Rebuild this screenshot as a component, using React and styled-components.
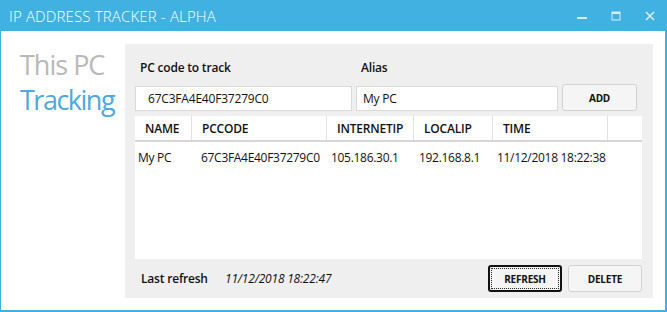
import React from "react";
import styled, { createGlobalStyle } from "styled-components";

const GlobalStyle = createGlobalStyle`
  html, body {
    margin: 0;
    padding: 0;
    background: #41b1e1;
  }
  * { box-sizing: border-box; }
`;

const font = `"Open Sans", "Noto Sans", "Liberation Sans", sans-serif`;

const Window = styled.div`
  width: 667px;
  height: 312px;
  display: flex;
  flex-direction: column;
  background: #41b1e1;
  font-family: ${font};
`;

const TitleBar = styled.div`
  height: 31px;
  display: flex;
  align-items: center;
  padding-left: 9px;
  color: #ffffff;
`;

const Title = styled.div`
  flex: 1;
  font-size: 15px;
  font-weight: 300;
  letter-spacing: 0.15px;
`;

const Controls = styled.div`
  display: flex;
  align-items: center;
  height: 100%;
`;

const ControlBtn = styled.div`
  width: 34px;
  height: 31px;
  display: flex;
  align-items: center;
  justify-content: center;
  color: #d7eef9;
`;

const Body = styled.div`
  flex: 1;
  display: flex;
  background: #ffffff;
  margin: 0 2px 2px 1px;
`;

const Sidebar = styled.div`
  width: 124px;
  padding: 16px 0 0 19px;
  display: flex;
  flex-direction: column;
`;

const NavItem = styled.div`
  font-size: 27px;
  line-height: 35px;
  color: ${({ active }) => (active ? "#4ea9dc" : "#b9b9b9")};
  letter-spacing: ${({ active }) => (active ? "-1.5px" : "-1px")};
`;

const Panel = styled.div`
  margin-top: 13px;
  width: 528px;
  height: 254px;
  background: #efefef;
  padding: 0 11px 0 10px;
  display: flex;
  flex-direction: column;
`;

const FormRow = styled.div`
  display: flex;
  gap: 4px;
  align-items: ${({ end }) => (end ? "flex-end" : "center")};
`;

const Label = styled.div`
  width: ${({ w }) => w}px;
  padding-left: 5px;
  font-size: 12px;
  line-height: 16px;
  font-weight: 600;
  color: #111;
  letter-spacing: -0.2px;
`;

const LabelRow = styled(FormRow)`
  padding-top: 16px;
  margin-bottom: 8px;
`;

const Input = styled.div`
  width: ${({ w }) => w}px;
  height: 25px;
  background: #fff;
  border: 1px solid #dadada;
  display: flex;
  align-items: center;
  padding-left: ${({ pad }) => pad}px;
  font-size: 12px;
  color: #111;
  letter-spacing: -0.2px;
`;

const Button = styled.div`
  width: ${({ w }) => w}px;
  height: 27px;
  margin-left: ${({ ml }) => ml || 0}px;
  border-radius: 3px;
  border: ${({ focused }) => (focused ? "2px solid #111" : "1px solid #d2d2d2")};
  background: #f5f5f5;
  display: flex;
  align-items: center;
  justify-content: center;
  font-size: 10px;
  font-weight: 700;
  color: #111;
  letter-spacing: -0.2px;
  outline: ${({ focused }) => (focused ? "1px dotted #222" : "none")};
  outline-offset: -4px;
`;

const Table = styled.div`
  margin-top: 5px;
  width: 507px;
  height: 143px;
  background: #fff;
`;

const gridCols = "57px 135px 87px 79px 115px 34px";

const HeaderRow = styled.div`
  display: grid;
  grid-template-columns: ${gridCols};
  height: 26px;
  border-bottom: 2px solid #d6d6d6;
`;

const HeaderCell = styled.div`
  border-right: 1px solid #e2e2e2;
  padding-left: 10px;
  display: flex;
  align-items: center;
  font-size: 12px;
  font-weight: 600;
  color: #111;
  letter-spacing: -0.2px;
  &:last-child { border-right: none; }
`;

const DataRow = styled.div`
  display: grid;
  grid-template-columns: ${gridCols};
  height: 30px;
  align-items: center;
`;

const DataCell = styled.div`
  padding-left: ${({ pad }) => pad}px;
  font-size: 12px;
  color: #111;
  white-space: nowrap;
  letter-spacing: -0.3px;
`;

const Footer = styled.div`
  margin-top: 6px;
  display: flex;
  align-items: center;
  height: 27px;
`;

const FooterLabel = styled.div`
  width: 90px;
  padding-left: 6px;
  font-size: 12px;
  font-weight: 600;
  color: #111;
  letter-spacing: -0.2px;
`;

const FooterDate = styled.div`
  flex: 1;
  font-size: 12px;
  font-style: italic;
  color: #111;
  letter-spacing: -0.2px;
`;

const columns = ["NAME", "PCCODE", "INTERNETIP", "LOCALIP", "TIME", ""];
const cellPad = [3, 9, 4, 5, 4, 0];
const rows = [
  ["My PC", "67C3FA4E40F37279C0", "105.186.30.1", "192.168.8.1", "11/12/2018 18:22:38", ""],
];

export default function App() {
  return (
    <>
      <GlobalStyle />
      <Window>
        <TitleBar>
          <Title>IP ADDRESS TRACKER - ALPHA</Title>
          <Controls>
            <ControlBtn>
              <svg width="10" height="10" viewBox="0 0 10 10">
                <rect x="0" y="6" width="10" height="2" fill="currentColor" />
              </svg>
            </ControlBtn>
            <ControlBtn>
              <svg width="10" height="10" viewBox="0 0 10 10">
                <rect x="1" y="1" width="8" height="8" fill="none" stroke="currentColor" strokeWidth="1" />
                <rect x="1" y="1" width="8" height="2" fill="currentColor" />
              </svg>
            </ControlBtn>
            <ControlBtn>
              <svg width="10" height="10" viewBox="0 0 10 10">
                <path d="M1 1 L9 9 M9 1 L1 9" stroke="currentColor" strokeWidth="1.6" />
              </svg>
            </ControlBtn>
          </Controls>
        </TitleBar>
        <Body>
          <Sidebar>
            <NavItem>This PC</NavItem>
            <NavItem active>Tracking</NavItem>
          </Sidebar>
          <Panel>
            <LabelRow>
              <Label w={217}>PC code to track</Label>
              <Label w={202}>Alias</Label>
            </LabelRow>
            <FormRow end>
              <Input w={217} pad={12}>67C3FA4E40F37279C0</Input>
              <Input w={202} pad={6}>My PC</Input>
              <Button w={75}>ADD</Button>
            </FormRow>
            <Table>
              <HeaderRow>
                {columns.map((c, i) => (
                  <HeaderCell key={i}>{c}</HeaderCell>
                ))}
              </HeaderRow>
              {rows.map((r, i) => (
                <DataRow key={i}>
                  {r.map((v, j) => (
                    <DataCell key={j} pad={cellPad[j]}>{v}</DataCell>
                  ))}
                </DataRow>
              ))}
            </Table>
            <Footer>
              <FooterLabel>Last refresh</FooterLabel>
              <FooterDate>11/12/2018 18:22:47</FooterDate>
              <Button w={74} focused>REFRESH</Button>
              <Button w={74} ml={6}>DELETE</Button>
            </Footer>
          </Panel>
        </Body>
      </Window>
    </>
  );
}
